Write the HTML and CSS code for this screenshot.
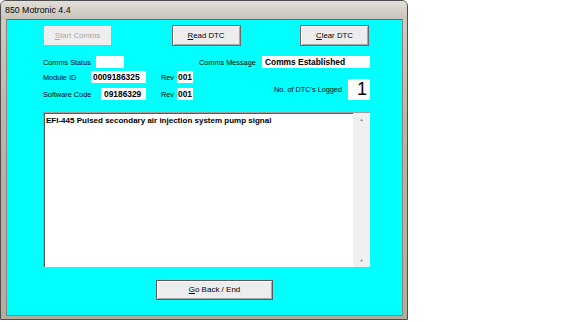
FILE: index.html
```html
<!DOCTYPE html>
<html>
<head>
<meta name="viewport" content="width=device-width, initial-scale=1">
<title>850 Motronic 4.4</title>
<link rel="stylesheet" href="styles.css">
</head>
<body>

<div class="window">
  <div class="titlebar">850 Motronic 4.4</div>
  <div class="client">
    <div class="panel">

      <div class="buttons">
        <button type="button" class="btn" disabled><u>S</u>tart Comms</button>
        <button type="button" class="btn"><u>R</u>ead DTC</button>
        <button type="button" class="btn"><u>C</u>lear DTC</button>
      </div>

      <div class="info">
        <div class="left-col">
          <div class="row">
            <span class="label status-label">Comms Status</span>
            <span class="box status-box"></span>
          </div>
          <div class="row row-module">
            <span class="label">Module ID</span>
            <span class="box module-box">0009186325</span>
            <span class="label rev">Rev</span>
            <span class="box rev-box">001</span>
          </div>
          <div class="row row-software">
            <span class="label">Software Code</span>
            <span class="box software-box">09186329</span>
            <span class="label rev">Rev</span>
            <span class="box rev-box">001</span>
          </div>
        </div>
        <div class="right-col">
          <div class="row">
            <span class="label">Comms Message</span>
            <span class="box message-box">Comms Established</span>
          </div>
          <div class="dtc-row">
            <span class="label">No. of DTC's Logged</span>
            <span class="count-box">1</span>
          </div>
        </div>
      </div>

      <div class="dtc-list">
        <div class="dtc-text">EFI-445 Pulsed secondary air injection system pump signal</div>
        <div class="scrollbar">
          <span class="arrow">&#9650;</span>
          <span class="arrow">&#9660;</span>
        </div>
      </div>

      <div class="footer">
        <button type="button" class="btn btn-back"><u>G</u>o Back / End</button>
      </div>

    </div>
  </div>
</div>

</body>
</html>
```

FILE: styles.css
```css
* {box-sizing: border-box;}

body {
  margin: 0;
  background: #ffffff;
  font-family: "Liberation Sans", Arial, sans-serif;
}

/* outer window frame */
.window {
  width: 408px;
  height: 320px;
  border: 1px solid #4e4e4e;
  border-radius: 6px 6px 0 0;
  background: linear-gradient(#d2cec6, #bab4a6 40%, #b3ad9f);
}

.titlebar {
  height: 18px;
  padding-left: 4px;
  font-size: 8.8px;
  line-height: 18px;
  color: #000;
  background: linear-gradient(#e2dfd9, #c9c4ba);
  border-radius: 5px 5px 0 0;
}

.client {
  margin: 0 4px 0 5px;
  height: 297px;
  background: #00ffff;
  border: 1px solid #8a8577;
  border-top-color: #6f6a5f;
}

.panel {
  margin-left: 36px;
  width: 327px;
  padding-top: 5px;
}

/* buttons */
.buttons {
  display: flex;
  justify-content: space-between;
  width: 326px;
}

.btn {
  width: 69px;
  height: 21px;
  padding: 0;
  font-family: "Liberation Sans", Arial, sans-serif;
  font-size: 7.8px;
  color: #000;
  background: #ededed;
  border: 1px solid #6a6a6a;
  box-shadow: inset 1px 1px #ffffff, inset -1px -1px #a8a8a8;
}

.btn u {
  text-decoration: underline;
}

.btn:disabled {
  color: #a6a6a6;
  border-color: #b2b2b2;
  background: #eeeeee;
  box-shadow: inset 1px 1px #ffffff;
}

/* info area */
.info {
  display: grid;
  grid-template-columns: 156px 171px;
  margin-top: 10px;
}

.row {
  display: flex;
  align-items: center;
  height: 12px;
}

.row-module {
  margin-top: 3px;
}

.row-software {
  margin-top: 5px;
}

.label {
  font-size: 7.3px;
  color: #000;
  white-space: nowrap;
}

.box {
  height: 12px;
  background: #ffffff;
  font-size: 8.4px;
  font-weight: bold;
  line-height: 12px;
  padding-left: 2px;
  white-space: nowrap;
  overflow: hidden;
}

.status-label {
  width: 53px;
}

.status-box {
  width: 28px;
}

.module-box {
  width: 55px;
  margin-left: auto;
}

.software-box {
  width: 45px;
  margin-left: auto;
  padding-left: 3px;
}

.left-col .row-module,
.left-col .row-software {
  width: 150px;
}

.rev {
  margin-left: 15px;
  width: 16px;
}

.rev-box {
  width: 16px;
  padding-left: 1px;
}

.message-box {
  width: 108px;
  margin-left: auto;
  padding-left: 3px;
}

.dtc-row {
  display: flex;
  align-items: center;
  justify-content: flex-end;
  gap: 6px;
  margin-top: 11px;
  height: 21px;
}

.count-box {
  width: 22px;
  height: 21px;
  background: #ffffff;
  font-size: 18px;
  line-height: 21px;
  text-align: right;
  padding-right: 3px;
}

/* DTC list box */
.dtc-list {
  display: flex;
  margin-top: 12px;
  height: 155px;
  background: #ffffff;
  border-top: 1px solid #a0a0a0;
  border-left: 1px solid #a0a0a0;
  box-shadow: inset 1px 1px #5a5a5a;
}

.dtc-text {
  flex: 1;
  padding: 3px 0 0 2px;
  font-size: 8px;
  font-weight: bold;
  color: #000;
}

.scrollbar {
  width: 17px;
  display: flex;
  flex-direction: column;
  justify-content: space-between;
  align-items: center;
  background: #f0f0f0;
  padding: 4px 0;
}

.arrow {
  font-size: 4px;
  color: #7a7a7a;
}

.footer {
  margin-top: 11px;
  padding-left: 113px;
}

.btn-back {
  width: 117px;
  height: 20px;
  font-size: 8px;
  border-color: #5c5c5c;
}
```
